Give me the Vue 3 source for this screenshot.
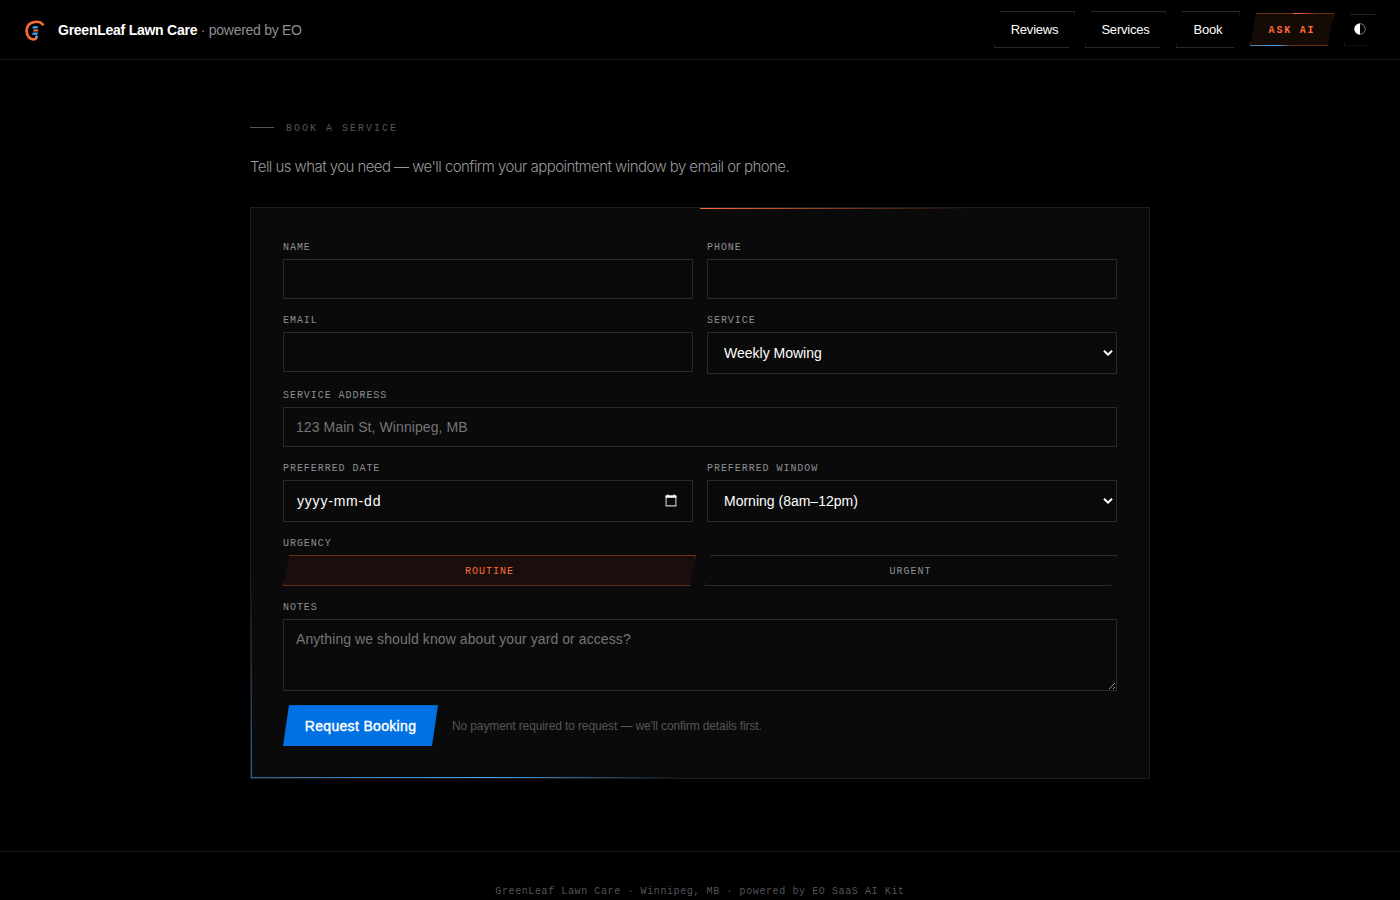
<script setup>
import { ref } from "vue";

const links = ["Reviews", "Services", "Book"];
const services = ["Weekly Mowing", "Fertilization", "Aeration", "Spring Cleanup"];
const windows = ["Morning (8am–12pm)", "Afternoon (12pm–5pm)"];

const form = ref({
  name: "",
  phone: "",
  email: "",
  service: services[0],
  address: "",
  date: "",
  window: windows[0],
  urgency: "Routine",
  notes: "",
});
</script>

<template>
  <div class="page">
    <header class="header">
      <div class="brand">
        <svg class="logo" width="24" height="24" viewBox="0 0 24 24" fill="none">
          <path d="M18.7 5.4C16.6 2.9 13 2.4 9.5 3.2C5 4.2 2.5 7.8 2.6 12C2.7 16.8 6 20.6 9.8 20.4C11.6 20.3 12.6 19.2 12.4 17.8" stroke="#ff6b35" stroke-width="2.6" stroke-linecap="round" />
          <path d="M9.2 7.2h5.2l-1.1 2.2H8z" fill="#42a5f5" />
          <path d="M9.8 10.6h4.8l-1 1.8H9z" fill="#ff6b35" />
          <path d="M9 13.6h5.2l-1.1 2.2H7.8z" fill="#42a5f5" />
          <path d="M11.7 16.6h2v2.4h-2z" fill="#42a5f5" />
        </svg>
        <p class="brand-text"><strong>GreenLeaf Lawn Care</strong> <span>· powered by EO</span></p>
      </div>
      <nav class="nav">
        <a v-for="link in links" :key="link" class="nav-link">{{ link }}</a>
        <a class="ask">ASK AI</a>
        <button class="toggle">
          <svg width="12" height="12" viewBox="0 0 12 12">
            <circle cx="6" cy="6" r="5.3" fill="none" stroke="#aaa" stroke-width=".7" />
            <path d="M6 .4a5.6 5.6 0 0 0 0 11.2z" fill="#fff" />
          </svg>
        </button>
      </nav>
    </header>

    <main class="main">
      <h2 class="eyebrow">BOOK A SERVICE</h2>
      <p class="lead">Tell us what you need — we'll confirm your appointment window by email or phone.</p>

      <form class="card" @submit.prevent>
        <label class="field">
          <span>NAME</span>
          <input v-model="form.name" class="control" type="text" />
        </label>
        <label class="field">
          <span>PHONE</span>
          <input v-model="form.phone" class="control" type="text" />
        </label>
        <label class="field">
          <span>EMAIL</span>
          <input v-model="form.email" class="control" type="text" />
        </label>
        <label class="field">
          <span>SERVICE</span>
          <div class="select">
            <select v-model="form.service" class="control tall">
              <option v-for="s in services" :key="s">{{ s }}</option>
            </select>
            <svg class="chevron" width="10" height="8" viewBox="0 0 10 8"><path d="M1 1.7L5 5.7L9 1.7" fill="none" stroke="#fff" stroke-width="2" /></svg>
          </div>
        </label>
        <label class="field wide">
          <span>SERVICE ADDRESS</span>
          <input v-model="form.address" class="control" type="text" placeholder="123 Main St, Winnipeg, MB" />
        </label>
        <label class="field">
          <span>PREFERRED DATE</span>
          <div class="select">
            <input v-model="form.date" class="control tall date" type="text" placeholder="yyyy-mm-dd" />
            <svg class="calendar" width="12" height="13" viewBox="0 0 12 13">
              <path d="M1.1 2.1h9.8v9.8H1.1z" fill="none" stroke="#ccc" stroke-width="1.1" />
              <path d="M.6 1.6h10.8v2.2H.6zM2.3 .4h1.2v1.4H2.3zM8.5 .4h1.2v1.4H8.5z" fill="#fff" />
            </svg>
          </div>
        </label>
        <label class="field">
          <span>PREFERRED WINDOW</span>
          <div class="select">
            <select v-model="form.window" class="control tall">
              <option v-for="w in windows" :key="w">{{ w }}</option>
            </select>
            <svg class="chevron" width="10" height="8" viewBox="0 0 10 8"><path d="M1 1.7L5 5.7L9 1.7" fill="none" stroke="#fff" stroke-width="2" /></svg>
          </div>
        </label>
        <div class="field wide">
          <span>URGENCY</span>
          <div class="urgency">
            <button
              v-for="u in ['Routine', 'Urgent']"
              :key="u"
              type="button"
              class="choice"
              :class="{ active: form.urgency === u }"
              @click="form.urgency = u"
            >{{ u }}</button>
          </div>
        </div>
        <label class="field wide">
          <span>NOTES</span>
          <textarea v-model="form.notes" class="control notes" placeholder="Anything we should know about your yard or access?"></textarea>
        </label>
        <div class="actions wide">
          <button class="submit">Request Booking</button>
          <small>No payment required to request — we'll confirm details first.</small>
        </div>
      </form>
    </main>

    <footer class="footer">GreenLeaf Lawn Care · Winnipeg, MB · powered by EO SaaS AI Kit</footer>
  </div>
</template>

<style>
body {
  background: #000;
  overflow: hidden;
}
</style>

<style scoped>
* {
  box-sizing: border-box;
}

.page {
  height: 900px;
  overflow: hidden;
  background: #000;
  color: #fff;
  font-family: "Liberation Sans", Arial, sans-serif;
}

button, input, select, textarea {
  font-family: inherit;
  margin: 0;
  border-radius: 0;
}

.header {
  height: 60px;
  padding: 0 24px;
  border-bottom: 1px solid #1a1a1a;
  display: flex;
  align-items: center;
  justify-content: space-between;
}

.brand {
  display: flex;
  align-items: center;
  gap: 10px;
}

.logo {
  margin-top: 2px;
}

.brand-text {
  margin: 1px 0 0;
  font-size: 14px;
  letter-spacing: -.28px;
  white-space: nowrap;
}

.brand-text strong {
  letter-spacing: -.25px;
}

.brand-text span {
  color: #8e8e93;
}

.nav {
  display: flex;
  align-items: center;
  gap: 10px;
}

.nav-link, .ask, .toggle, .choice {
  clip-path: polygon(6px 0, 100% 0, calc(100% - 6px) 100%, 0 100%);
  display: flex;
  align-items: center;
  justify-content: center;
}

.nav-link {
  width: 81px;
  height: 37px;
  border: 1px solid #2a2a2a;
  font-size: 13px;
  letter-spacing: -.2px;
}

.nav-link:nth-child(3) {
  width: 64px;
}

.ask {
  position: relative;
  width: 84px;
  height: 33px;
  padding-top: 2px;
  border: 1px solid #6b2f19;
  background: #140a06;
  color: #ff6b35;
  font: bold 10px "Liberation Mono", monospace;
  letter-spacing: .18em;
}

/* accent strokes over the border */
.ask::before, .ask::after {
  content: "";
  position: absolute;
  height: 1px;
  width: 50%;
}

.ask::before {
  top: -1px;
  right: -1px;
  background: linear-gradient(90deg, #ff6b35, transparent 60%);
}

.ask::after {
  bottom: -1px;
  left: -1px;
  background: linear-gradient(90deg, #5a7a9c, #42a5f5 70%, transparent);
}

.toggle {
  width: 32px;
  height: 32px;
  padding: 0 0 2px;
  border: 1px solid #222;
  background: #000;
}

.main {
  width: 900px;
  height: 791px;
  margin: 0 auto;
  padding-top: 61px;
}

.eyebrow {
  display: flex;
  align-items: center;
  gap: 12px;
  height: 14px;
  margin: 0;
  color: #55555a;
  font: 10px "Liberation Mono", monospace;
  letter-spacing: .2em;
}

.eyebrow::before {
  content: "";
  width: 24px;
  height: 1px;
  margin-bottom: 1px;
  background: #55555a;
}

.lead {
  margin: 20px 0 28px;
  color: #98989d;
  font: 300 15px/24px Inter, sans-serif;
  letter-spacing: -.565px;
  white-space: nowrap;
}

.card {
  position: relative;
  display: grid;
  grid-template-columns: 1fr 1fr;
  align-items: start;
  gap: 14px;
  padding: 32px;
  border: 1px solid #1e1e1e;
  background: #0a0a0a;
}

.card::before {
  content: "";
  position: absolute;
  top: 0;
  right: 0;
  width: 50%;
  height: 1px;
  background: linear-gradient(90deg, #ff6b35, transparent 60%);
}

.card::after {
  content: "";
  position: absolute;
  left: 0;
  bottom: 0;
  width: 50%;
  height: 200px;
  pointer-events: none;
  background:
    linear-gradient(90deg, #2a6496, #42a5f5 53%, transparent 97%) bottom / 100% 1px no-repeat,
    linear-gradient(0deg, #2a6496, transparent) left / 1px 100% no-repeat;
}

.wide {
  grid-column: 1 / -1;
}

.field > span {
  display: block;
  height: 19px;
  padding-top: 1px;
  color: #8e8e93;
  font: 10px/14px "Liberation Mono", monospace;
  letter-spacing: .095em;
}

.control {
  display: block;
  width: 100%;
  height: 40px;
  padding: 0 12px;
  border: 1px solid #2a2a2a;
  background: #0a0a0a;
  color: #fff;
  font-size: 14px;
  outline: none;
  appearance: none;
}

.control::placeholder {
  color: #757575;
  letter-spacing: .08px;
  opacity: 1;
}

.tall {
  height: 42px;
}

.select {
  position: relative;
}

.select select {
  padding: 0 16px;
}

.control.date {
  padding-left: 13px;
}

.control.date::placeholder {
  color: #fff;
  letter-spacing: .8px;
}

.chevron {
  position: absolute;
  right: 4px;
  top: 17px;
}

.calendar {
  position: absolute;
  right: 16px;
  top: 14px;
}

.urgency {
  display: grid;
  grid-template-columns: 1fr 1fr;
  gap: 8px;
}

.choice {
  height: 31px;
  padding: 2px 0 0;
  border: 1px solid #2a2a2a;
  background: #0a0a0a;
  color: #8e8e93;
  font: 10px "Liberation Mono", monospace;
  letter-spacing: .1em;
  text-transform: uppercase;
}

.choice.active {
  border-color: #6b2f19;
  background: #190e0b;
  color: #ff6b35;
}

.notes {
  height: 72px;
  padding: 11px 12px;
  resize: vertical;
}

.actions {
  display: flex;
  align-items: center;
  gap: 14px;
}

.submit {
  width: 155px;
  height: 41px;
  padding: 0;
  border: 0;
  border-top: 1px solid #0062c4;
  background: #0071e3;
  color: #fff;
  font-size: 14px;
  letter-spacing: .33px;
  -webkit-text-stroke: .4px #fff;
  clip-path: polygon(6px 0, 100% 0, calc(100% - 6px) 100%, 0 100%);
}

.actions small {
  color: #55555a;
  font-size: 12px;
  letter-spacing: -.12px;
}

.footer {
  height: 80px;
  padding-top: 33px;
  border-top: 1px solid #1a1a1a;
  color: #55555a;
  font: 10px/14px "Liberation Mono", monospace;
  letter-spacing: .06em;
  text-align: center;
}
</style>
